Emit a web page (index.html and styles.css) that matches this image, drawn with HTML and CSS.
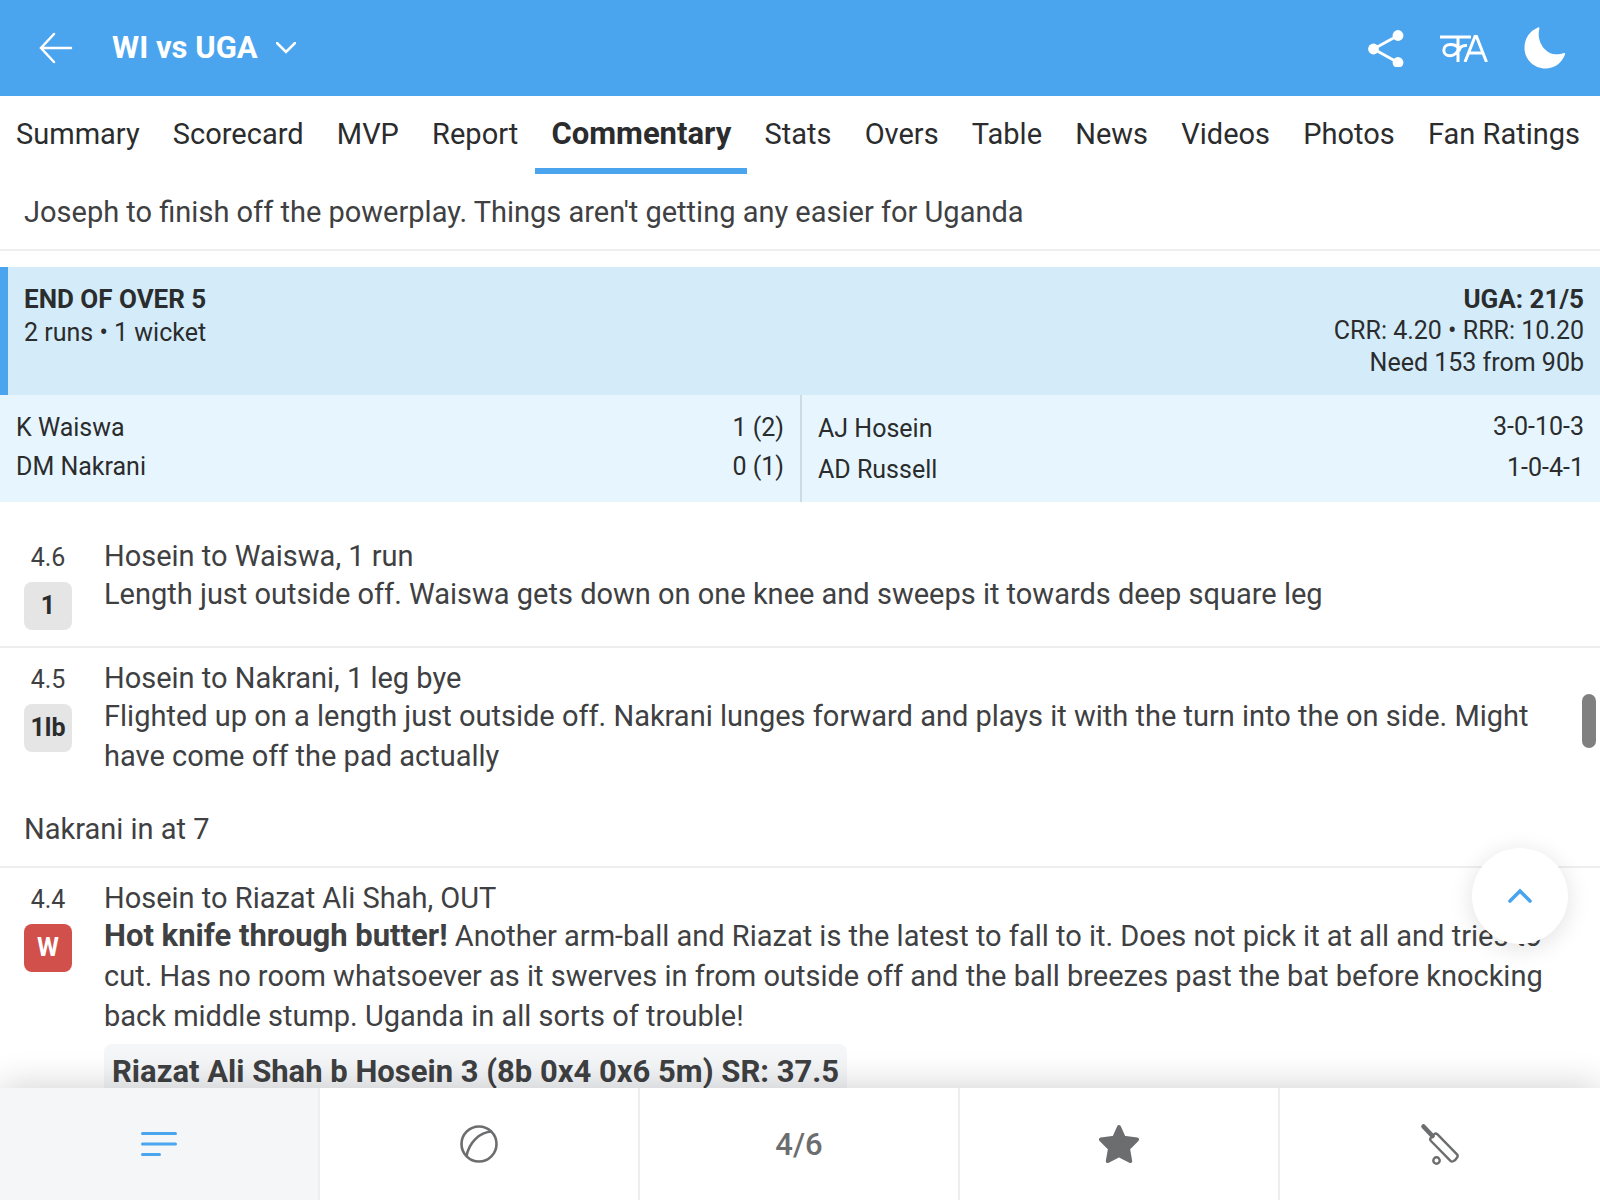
FILE: index.html
```html
<!DOCTYPE html>
<html lang="en">
<head>
<meta charset="utf-8">
<meta name="viewport" content="width=device-width, initial-scale=1">
<title>WI vs UGA - Commentary</title>
<link rel="stylesheet" href="styles.css">
</head>
<body>
<header class="topbar">
  <button class="icon-btn" type="button" aria-label="Back">
    <svg width="34" height="32" viewBox="0 0 34 32" class="line-icon"><path d="M32 16H2M15 2L2 16l13 14"/></svg>
  </button>
  <button class="match-picker" type="button">
    <span>WI vs UGA</span>
    <svg width="20" height="12" viewBox="0 0 20 12" class="line-icon"><path d="M1 1l9 9 9-9"/></svg>
  </button>
  <div class="actions">
    <button class="icon-btn" type="button" aria-label="Share">
      <svg width="36" height="38" viewBox="0 0 36 38"><g fill="#fff"><circle cx="5.500" cy="20" r="5.400"/><circle cx="30" cy="6.500" r="5.400"/><circle cx="30" cy="33.500" r="5.400"/></g><path d="M30 6.500L5.500 20l24.500 13.500" stroke="#fff" stroke-width="2.800" fill="none"/></svg>
    </button>
    <button class="icon-btn" type="button" aria-label="Language">
      <svg width="48" height="28" viewBox="0 0 48 28" fill="none" stroke="#fff" stroke-width="3"><path d="M0 3h31M18 3v25M18 14c-1-2-3.500-3.500-7.500-3.500-4.200 0-6.700 2.500-6.700 5.800s2.500 5.400 6 5.400c4 0 6.700-2 8.200-5.700M19 17.500c0-3.500 2.500-6.500 8-6M25 28L35 2.500h1.500L46.500 28M28 19h15"/></svg>
    </button>
    <button class="icon-btn" type="button" aria-label="Dark mode">
      <svg width="42" height="42" viewBox="0 0 42 42"><path fill="#fff" d="M13.500 0.800C15-.2 15.800.5 15.200 2.500C12.500 14 21 28.500 34.500 27.300c2.500-.2 4-.9 5.800-1.200.8 0 1 .6.700 1.400C37.500 36.500 30 41.500 21.500 41.500 10 41.500.5 32.500.5 21 .5 11 6 4 13.500.8z"/></svg>
    </button>
  </div>
</header>

<nav class="tabs" aria-label="Match sections">
  <a href="#">Summary</a>
  <a href="#">Scorecard</a>
  <a href="#">MVP</a>
  <a href="#">Report</a>
  <a href="#" class="active" aria-current="page">Commentary</a>
  <a href="#">Stats</a>
  <a href="#">Overs</a>
  <a href="#">Table</a>
  <a href="#">News</a>
  <a href="#">Videos</a>
  <a href="#">Photos</a>
  <a href="#">Fan Ratings</a>
</nav>

<main class="feed">
  <p class="note">Joseph to finish off the powerplay. Things aren't getting any easier for Uganda</p>

  <section class="over">
    <div class="over-head">
      <div class="over-left"><strong>END OF OVER 5</strong><span>2 runs • 1 wicket</span></div>
      <div class="over-right"><strong>UGA: 21/5</strong><span>CRR: 4.20 • RRR: 10.20</span><span>Need 153 from 90b</span></div>
    </div>
    <div class="over-stats">
      <div class="half">
        <table class="batters" aria-label="Batters">
          <tr><td>K Waiswa</td><td class="fig">1 (2)</td></tr>
          <tr><td>DM Nakrani</td><td class="fig">0 (1)</td></tr>
        </table>
      </div>
      <div class="half">
        <table class="bowlers" aria-label="Bowlers">
          <tr><td>AJ Hosein</td><td class="fig">3-0-10-3</td></tr>
          <tr><td>AD Russell</td><td class="fig">1-0-4-1</td></tr>
        </table>
      </div>
    </div>
  </section>

  <article class="ball ruled">
    <div class="ball-side"><span class="ball-no">4.6</span><span class="badge">1</span></div>
    <div class="ball-text">
      <h2>Hosein to Waiswa, 1 run</h2>
      <p>Length just outside off. Waiswa gets down on one knee and sweeps it towards deep square leg</p>
    </div>
  </article>

  <article class="ball">
    <div class="ball-side"><span class="ball-no">4.5</span><span class="badge">1lb</span></div>
    <div class="ball-text">
      <h2>Hosein to Nakrani, 1 leg bye</h2>
      <p>Flighted up on a length just outside off. Nakrani lunges forward and plays it with the turn into the on side. Might have come off the pad actually</p>
    </div>
  </article>

  <p class="note">Nakrani in at 7</p>

  <article class="ball">
    <div class="ball-side"><span class="ball-no">4.4</span><span class="badge wicket">W</span></div>
    <div class="ball-text">
      <h2>Hosein to Riazat Ali Shah, OUT</h2>
      <p><b>Hot knife through butter!</b> Another arm-ball and Riazat is the latest to fall to it. Does not pick it at all and tries to cut. Has no room whatsoever as it swerves in from outside off and the ball breezes past the bat before knocking back middle stump. Uganda in all sorts of trouble!</p>
      <strong class="dismissal">Riazat Ali Shah b Hosein 3 (8b 0x4 0x6 5m) SR: 37.5</strong>
    </div>
  </article>
</main>

<div class="scroll-thumb"></div>
<button class="to-top" type="button" aria-label="Back to top">
  <svg width="26" height="16" viewBox="0 0 26 16" fill="none" stroke="#4ba5ee" stroke-width="3.600" stroke-linecap="round"><path d="M3 13L13 3l10 10"/></svg>
</button>

<nav class="filters" aria-label="Commentary filters">
  <button type="button" class="selected" aria-label="All commentary">
    <svg width="36" height="26" viewBox="0 0 36 26" stroke="#4ba5ee" stroke-width="3" stroke-linecap="round"><path d="M1.500 2.500h33M1.500 13h33M1.500 23.500h17"/></svg>
  </button>
  <button type="button" aria-label="Wickets">
    <svg width="38" height="38" viewBox="0 0 38 38" fill="none" stroke="#6c6d6f" stroke-width="2.600"><circle cx="19" cy="19" r="17.500"/><path d="M6.500 31C9 18 19 7 32 6.500"/></svg>
  </button>
  <button type="button">4/6</button>
  <button type="button" aria-label="Highlights">
    <svg width="40" height="40" viewBox="0 0 40 40" fill="#6c6d6f" stroke="#6c6d6f" stroke-width="4" stroke-linejoin="round"><path d="M20 3l4.800 10.700L38 15.500l-9 9L31.200 37 20 31.300 8.800 37 11 24.500l-9-9 13.200-1.800z"/></svg>
  </button>
  <button type="button" aria-label="Full innings">
    <svg width="40" height="42" viewBox="0 0 40 42" fill="none" stroke="#6c6d6f" stroke-width="2.400" stroke-linejoin="round"><path d="M3.500 3.500l9 9.500" stroke-width="4.600" stroke-linecap="round"/><path d="M11 14.500l3.500-3.500c1-.9 2-.6 3 .3l19.500 20c1 1 .8 2 .2 3-1 1.700-2.200 3-4 4-1 .5-1.800.5-2.700-.4L11 18c-.9-1-.9-2.500 0-3.500z"/><circle cx="16.500" cy="37.500" r="3.200"/></svg>
  </button>
</nav>
</body>
</html>
```
FILE: styles.css
```css
* { box-sizing: border-box; }

body {
  margin: 0;
  height: 100vh;
  display: flex;
  flex-direction: column;
  overflow: hidden;
  position: relative;
  background: #fff;
  color: #2b2c2d;
  font-family: Roboto, "Liberation Sans", sans-serif;
  font-size: 29px;
}

button {
  border: 0;
  padding: 0;
  background: none;
  color: inherit;
  font: inherit;
  cursor: pointer;
}

svg { display: block; }

p, h2 { margin: 0; }

/* Top bar */
.topbar {
  flex: none;
  height: 96px;
  padding: 0 34px 0 39px;
  display: flex;
  align-items: center;
  background: #4ba5ee;
  color: #fff;
}

.line-icon {
  fill: none;
  stroke: #fff;
  stroke-width: 2.5;
  stroke-linecap: round;
}

.match-picker {
  display: flex;
  align-items: center;
  gap: 18px;
  margin-left: 39px;
  font-size: 31px;
  font-weight: 700;
  line-height: 32px;
}

.actions {
  display: flex;
  align-items: center;
  gap: 36px;
  margin-left: auto;
}

/* Section tabs */
.tabs {
  flex: none;
  display: flex;
  justify-content: space-between;
  height: 78px;
  padding-right: 4px;
}

.tabs a {
  padding: 0 16px;
  line-height: 76px;
  color: #2b2c2d;
  text-decoration: none;
  white-space: nowrap;
}

.tabs .active {
  font-size: 31px;
  font-weight: 700;
  border-bottom: 6px solid #4ba5ee;
}

/* Commentary feed */
.feed {
  flex: 1;
  min-height: 0;
  padding-top: 1px;
  overflow: hidden;
  color: #3e4042;
}

.note {
  padding: 17px 24px;
  line-height: 40px;
  border-bottom: 2px solid #edeef0;
}

.over {
  margin: 16px 0 24px;
  color: #2b2c2d;
  font-size: 25px;
  line-height: 32px;
}

.over strong { font-size: 26px; }

.over-head {
  display: flex;
  justify-content: space-between;
  padding: 16px;
  border-left: 8px solid #4ba5ee;
  background: #d4ecfa;
}

.over-left,
.over-right {
  display: flex;
  flex-direction: column;
}

.over-left span { line-height: 36px; }

.over-right { text-align: right; }

.over-stats {
  display: grid;
  grid-template-columns: 1fr 1fr;
  background: #e7f6fe;
}

.half { padding: 13px 16px 12px; }

.half + .half { border-left: 2px solid #cddbe2; }

.half table {
  width: 100%;
  border-collapse: collapse;
}

.half td {
  padding: 0;
  vertical-align: top;
}

.half .fig { text-align: right; }

.batters td { line-height: 39px; }

.bowlers td { line-height: 41px; }

.bowlers .fig { line-height: 37px; }

.ball {
  display: flex;
  gap: 32px;
  padding: 12px 32px 16px 24px;
}

.ruled { border-bottom: 2px solid #edeef0; }

.ball-side {
  flex: none;
  width: 48px;
  text-align: center;
  font-size: 25px;
}

.ball-no {
  display: block;
  line-height: 40px;
  margin-bottom: 4px;
}

.badge {
  display: block;
  height: 48px;
  line-height: 48px;
  border-radius: 8px;
  background: #e5e5e5;
  color: #2b2c2d;
  font-weight: 700;
}

.wicket {
  background: #d2504b;
  color: #fff;
}

.ball-text {
  flex: 1;
  line-height: 40px;
}

.ball-text h2 {
  font-size: 29px;
  font-weight: 400;
  line-height: 36px;
}

.ball-text b {
  font-size: 31px;
  line-height: 36px;
}

.dismissal {
  display: inline-block;
  margin-top: 8px;
  padding: 8px;
  border-radius: 8px;
  background: #f5f6f8;
  font-size: 31px;
}

/* Floating controls */
.scroll-thumb {
  position: absolute;
  right: 4px;
  top: 694px;
  width: 14px;
  height: 54px;
  border-radius: 7px;
  background: #808080;
}

.to-top {
  position: absolute;
  right: 32px;
  bottom: 256px;
  width: 96px;
  height: 96px;
  display: flex;
  align-items: center;
  justify-content: center;
  border-radius: 50%;
  background: #fff;
  box-shadow: 0 4px 24px rgba(0, 0, 0, 0.12);
}

/* Bottom filter bar */
.filters {
  flex: none;
  position: relative;
  display: grid;
  grid-template-columns: repeat(5, 1fr);
  height: 112px;
  background: #fff;
  box-shadow: 0 -4px 32px rgba(0, 0, 0, 0.16);
}

.filters button {
  display: flex;
  align-items: center;
  justify-content: center;
  border-right: 2px solid #edeef0;
  color: #6c6d6f;
  font-size: 31px;
  font-weight: 500;
}

.filters button:last-child { border-right: 0; }

.filters .selected { background: #f5f6f8; }
```
